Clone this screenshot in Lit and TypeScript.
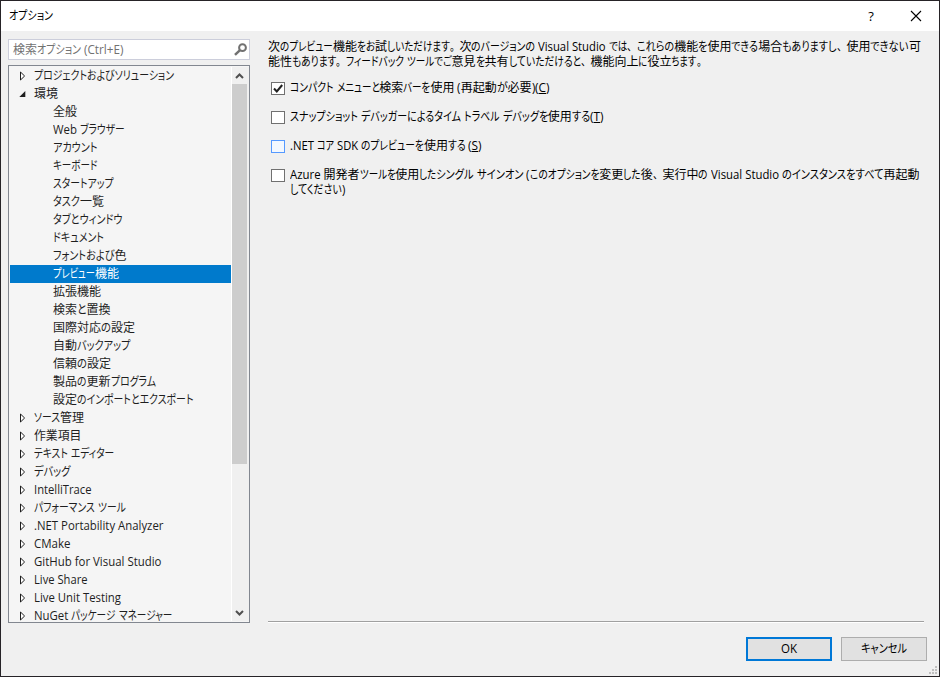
import { LitElement, html, css, svg, nothing } from "lit";
import { customElement, property } from "lit/decorators.js";

type Segment = [text: string, width: number];
type Script = "stop" | "kana" | "kanji" | "latin";

const RUN = /[\u3001\u3002]+|[\u3003-\u30ff]+|[\u4e00-\u9fff]+|[^\u3001-\u30ff\u4e00-\u9fff]+/g;
const SCALE: Record<Script, number> = { stop: 0.8, kana: 1, kanji: 1, latin: 0.95 };

const scriptOf = (run: string): Script =>
  /^[\u3001\u3002]/.test(run) ? "stop" : /^[\u3003-\u30ff]/.test(run) ? "kana" : /^[\u4e00-\u9fff]/.test(run) ? "kanji" : "latin";

/** One run of label text, fitted to a given advance width by condensing its kana. */
@customElement("ui-text")
class UiText extends LitElement {
  @property() text = "";
  @property({ type: Number }) width = 0;

  static styles = css`
    :host {
      display: inline-flex;
      white-space: pre;
    }
    .run {
      display: inline-block;
      flex: none;
      font-feature-settings: "palt";
    }
    .run.stop {
      font-feature-settings: normal;
    }
    .glyphs {
      display: inline-block;
      transform-origin: 0 50%;
    }
    u {
      text-decoration-thickness: 1px;
      text-underline-offset: 1px;
    }
  `;

  private get runs(): string[] {
    return this.text.match(RUN) ?? [];
  }

  protected updated() {
    const glyphs = [...this.renderRoot.querySelectorAll<HTMLElement>(".glyphs")];
    glyphs.forEach((g) => {
      g.style.transform = "";
      g.parentElement!.style.width = "";
    });
    const widths = glyphs.map((g) => g.getBoundingClientRect().width);
    const kinds = this.runs.map(scriptOf);
    const hasKana = kinds.includes("kana");
    const flexible = kinds.map((k) => !hasKana || k === "kana");
    let fixed = 0;
    let free = 0;
    widths.forEach((w, i) => {
      if (flexible[i]) free += w;
      else fixed += w * SCALE[kinds[i]];
    });
    const factor = free ? (this.width - fixed) / free : 1;
    glyphs.forEach((g, i) => {
      const s = flexible[i] ? factor : SCALE[kinds[i]];
      g.style.transform = `scaleX(${s})`;
      g.parentElement!.style.width = `${widths[i] * s}px`;
    });
  }

  render() {
    return this.runs.map((r) => {
      const at = r.indexOf("&");
      const body = at < 0 ? r : html`${r.slice(0, at)}<u>${r[at + 1]}</u>${r.slice(at + 2)}`;
      return html`<span class="run ${scriptOf(r)}"><span class="glyphs">${body}</span></span>`;
    });
  }
}

const line = (segments: Segment[]) =>
  segments.map(([t, w]) => html`<ui-text .text=${t} .width=${w}></ui-text>`);

interface Node {
  label: string;
  width: number;
  kind: "closed" | "open" | "leaf";
  selected?: boolean;
}
const node = (label: string, width: number, kind: Node["kind"] = "closed", selected = false): Node => ({ label, width, kind, selected });

const NODES: Node[] = [
  node("プロジェクトおよびソリューション", 140),
  node("環境", 24, "open"),
  node("全般", 24, "leaf"),
  node("Web ブラウザー", 71.5, "leaf"),
  node("アカウント", 44.5, "leaf"),
  node("キーボード", 44.5, "leaf"),
  node("スタートアップ", 60.5, "leaf"),
  node("タスク一覧", 51, "leaf"),
  node("タブとウィンドウ", 69.5, "leaf"),
  node("ドキュメント", 51, "leaf"),
  node("フォントおよび色", 73.5, "leaf"),
  node("プレビュー機能", 66, "leaf", true),
  node("拡張機能", 48, "leaf"),
  node("検索と置換", 57.5, "leaf"),
  node("国際対応の設定", 82, "leaf"),
  node("自動バックアップ", 77.5, "leaf"),
  node("信頼の設定", 58, "leaf"),
  node("製品の更新プログラム", 102.5, "leaf"),
  node("設定のインポートとエクスポート", 140.5, "leaf"),
  node("ソース管理", 50),
  node("作業項目", 47.5),
  node("テキスト エディター", 80),
  node("デバッグ", 36.5),
  node("IntelliTrace", 57.5),
  node("パフォーマンス ツール", 91.5),
  node(".NET Portability Analyzer", 129.5),
  node("CMake", 36.5),
  node("GitHub for Visual Studio", 127.5),
  node("Live Share", 53.5),
  node("Live Unit Testing", 87),
  node("NuGet パッケージ マネージャー", 138),
];

const INTRO: Segment[][] = [
  [
    ["次のプレビュー機能をお試しいただけます。", 191.5],
    ["次のバージョンの ", 79],
    ["Visual Studio ", 70.5],
    ["では、", 28],
    ["これらの機能を使用できる場合もありますし、", 209.5],
    ["使用できない可", 74.5],
  ],
  [
    ["能性もあります。", 78],
    ["フィードバック ", 61],
    ["ツールで", 36],
    ["ご意見を共有していただけると、", 147.5],
    ["機能向上に役立ちます。", 116],
  ],
];

interface Option {
  state: "checked" | "hover" | "plain";
  lines: Segment[][];
}
const OPTIONS: Option[] = [
  { state: "checked", lines: [[["コンパクト ", 46.5], ["メニューと検索バーを使用 ", 121], ["(再起動が必要)", 77.5], ["(&C)", 14.5]]] },
  { state: "plain", lines: [[["スナップショット ", 71], ["デバッガーによるタイム ", 103], ["トラベル ", 38.5], ["デバッグを使用する", 87.5], ["(&T)", 13.5]]] },
  { state: "hover", lines: [[[".NET ", 27], ["コア ", 20], ["SDK ", 24], ["のプレビューを使用する ", 107.5], ["(&S)", 13.5]]] },
  {
    state: "plain",
    lines: [
      [
        ["Azure ", 33.5],
        ["開発者ツールを使用した", 113],
        ["シングル ", 40.5],
        ["サインオン ", 49.5],
        ["(このオプションを変更した後、", 136],
        ["実行中の ", 48.5],
        ["Visual Studio ", 71],
        ["のインスタンスをすべて再起動", 137.5],
      ],
      [["してください)", 55]],
    ],
  },
];

const arrow = (kind: Node["kind"]) =>
  kind === "leaf"
    ? nothing
    : html`<svg class="arrow" width="8" height="10" viewBox="0 0 8 10">
        ${kind === "open"
          ? svg`<path d="M6.3 2V8H0.3Z" fill="#1e1e1e" />`
          : svg`<path d="M1.5 1V9L5.6 5Z" fill="#fff" stroke="#1e1e1e" />`}
      </svg>`;

@customElement("app-root")
class AppRoot extends LitElement {
  static styles = css`
    :host {
      display: block;
    }
    * {
      box-sizing: border-box;
    }
    .window {
      width: 940px;
      height: 677px;
      display: flex;
      flex-direction: column;
      border: 1px solid #262327;
      background: #f0f0f0;
      color: #000;
      font: 12px/18px "Open Sans", "Noto Sans CJK JP", sans-serif;
      overflow: hidden;
      position: relative;
    }
    .titlebar {
      height: 30px;
      flex: none;
      display: flex;
      align-items: center;
      background: #fff;
      padding: 0 17px 0 8px;
    }
    .title {
      flex: 1;
      display: flex;
    }
    .help {
      width: 12px;
      font: 500 13px/18px "Open Sans", sans-serif;
      text-align: center;
      margin-right: 33px;
    }
    .content {
      flex: none;
      display: flex;
      height: 592px;
      padding: 8px 15px 0 7px;
    }
    .side {
      width: 242px;
      flex: none;
      display: flex;
      flex-direction: column;
      gap: 5px;
    }
    .search {
      height: 21px;
      display: flex;
      align-items: center;
      justify-content: space-between;
      border: 1px solid #cccedb;
      background: #fff;
      color: #717171;
      padding: 0 2px 0 4px;
    }
    .tree {
      height: 558px;
      display: flex;
      border: 1px solid #828790;
      background: #f5f5f5;
      padding: 1px;
      overflow: hidden;
    }
    .nodes {
      width: 221px;
      flex: none;
      height: 554px;
      overflow: hidden;
      color: #1e1e1e;
    }
    .node {
      height: 18px;
      display: flex;
      align-items: center;
    }
    .node.branch {
      padding-left: 9px;
    }
    .node.leaf {
      padding-left: 43px;
    }
    .node.selected {
      background: #007acc;
      color: #fff;
    }
    .arrow {
      margin-right: 7px;
      flex: none;
    }
    .scroll {
      width: 18px;
      height: 554px;
      flex: none;
      display: flex;
      flex-direction: column;
      align-items: flex-start;
      background: #f0f0f0;
      border-left: 1px solid #fff;
    }
    .scroll svg {
      flex: none;
    }
    .thumb {
      width: 15px;
      height: 380px;
      background: #cdcdcd;
      margin-bottom: auto;
    }
    .pane {
      width: 656px;
      margin-left: 18px;
      height: 583px;
      border-bottom: 1px solid #a0a0a0;
      box-shadow: 0 1px #fff;
    }
    .line {
      display: flex;
      height: 15px;
      line-height: 15px;
    }
    .options {
      display: flex;
      flex-direction: column;
      gap: 14px;
      padding: 11px 0 0 3px;
    }
    .option {
      display: flex;
      gap: 5px;
    }
    .box {
      width: 14px;
      height: 13px;
      flex: none;
      margin-top: 2px;
      border: 1px solid #707070;
      background: #fff;
      display: block;
    }
    .box.hover {
      border-color: #5599ff;
      background: #f3f8ff;
    }
    .box svg {
      display: block;
    }
    .footer {
      display: flex;
      justify-content: flex-end;
      gap: 9px;
      padding: 14px 12px 0 0;
    }
    .button {
      width: 86px;
      height: 24px;
      display: flex;
      align-items: center;
      justify-content: center;
      background: #e1e1e1;
      border: 1px solid #adadad;
    }
    .button.primary {
      border: 2px solid #0078d7;
    }
    .grip {
      position: absolute;
      right: 2px;
      bottom: 2px;
    }
  `;

  render() {
    return html`
      <div class="window">
        <div class="titlebar">
          <span class="title">${line([["オプション", 44]])}</span>
          <span class="help">?</span>
          <svg width="12" height="12" viewBox="0 0 12 12">
            <path d="M1 1L11 11M11 1L1 11" stroke="#000" stroke-width="1.1" fill="none" />
          </svg>
        </div>
        <div class="content">
          <div class="side">
            <div class="search">
              <span>${line([["検索オプション ", 71], ["(Ctrl+E)", 39.5]])}</span>
              <svg width="13" height="13" viewBox="0 0 13 13">
                <circle cx="8.5" cy="4.7" r="3.4" fill="none" stroke="#717171" stroke-width="2" />
                <path d="M6 7.2L1 11.9" stroke="#717171" stroke-width="2.5" />
              </svg>
            </div>
            <div class="tree">
              <div class="nodes">
                ${NODES.map(
                  (n) => html`<div class="node ${n.kind === "leaf" ? "leaf" : "branch"} ${n.selected ? "selected" : ""}">
                    ${arrow(n.kind)}${line([[n.label, n.width]])}
                  </div>`
                )}
              </div>
              <div class="scroll">
                <svg width="15" height="17" viewBox="0 0 15 17">
                  <path d="M4 11L7.5 7.5L11 11" stroke="#505050" stroke-width="2" fill="none" />
                </svg>
                <div class="thumb"></div>
                <svg width="15" height="17" viewBox="0 0 15 17">
                  <path d="M4 7L7.5 10.5L11 7" stroke="#505050" stroke-width="2" fill="none" />
                </svg>
              </div>
            </div>
          </div>
          <div class="pane">
            ${INTRO.map((l) => html`<div class="line">${line(l)}</div>`)}
            <div class="options">
              ${OPTIONS.map(
                (o) => html`<div class="option">
                  <span class="box ${o.state}">
                    ${o.state === "checked"
                      ? html`<svg width="12" height="11" viewBox="0 0 12 11">
                          <path d="M2 5.5L4.8 8.5L10.2 2" stroke="#212121" stroke-width="2" fill="none" />
                        </svg>`
                      : nothing}
                  </span>
                  <div>${o.lines.map((l) => html`<div class="line">${line(l)}</div>`)}</div>
                </div>`
              )}
            </div>
          </div>
        </div>
        <div class="footer">
          <div class="button primary">${line([["OK", 16]])}</div>
          <div class="button">${line([["キャンセル", 46]])}</div>
        </div>
        <svg class="grip" width="8" height="8" viewBox="0 0 8 8" fill="#bfbfbf">
          <path d="M6 0h2v2h-2zM3 3h2v2h-2zM6 3h2v2h-2zM0 6h2v2h-2zM3 6h2v2h-2zM6 6h2v2h-2z" />
        </svg>
      </div>
    `;
  }
}
